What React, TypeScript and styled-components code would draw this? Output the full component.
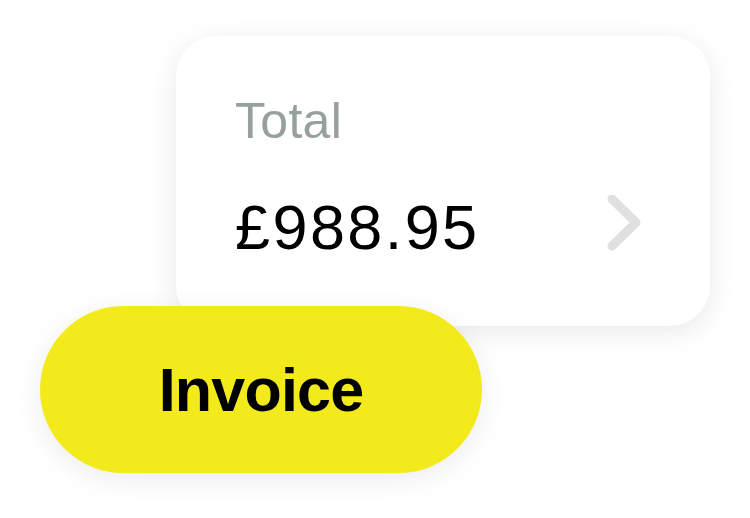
import React from "react"
import styled, { createGlobalStyle } from "styled-components"

const GlobalStyle = createGlobalStyle`
  html, body {
    margin: 0;
    padding: 0;
    background: #ffffff;
    font-family: "Liberation Sans", Arial, sans-serif;
  }
`

const Page = styled.div`
  display: flex;
  flex-direction: column;
  align-items: flex-start;
  width: 750px;
  height: 518px;
  overflow: hidden;
`

const Card = styled.div`
  box-sizing: border-box;
  display: flex;
  flex-direction: column;
  width: 534px;
  height: 290px;
  margin: 36px 0 0 176px;
  padding: 60px 66px 0 59px;
  background: #ffffff;
  border-radius: 40px;
  box-shadow: 0 6px 28px rgba(0, 0, 0, 0.09);
`

const Label = styled.div`
  font-size: 50px;
  line-height: 50px;
  letter-spacing: 0.3px;
  color: #96a19e;
`

const AmountRow = styled.div`
  display: flex;
  align-items: center;
  justify-content: space-between;
  margin-top: 49px;
`

const Amount = styled.div`
  font-size: 63px;
  line-height: 63px;
  letter-spacing: 2.4px;
  color: #000000;
`

const Chevron = styled.svg`
  width: 40px;
  height: 64px;
  flex-shrink: 0;
`

const InvoiceButton = styled.button`
  position: relative;
  display: flex;
  align-items: center;
  justify-content: center;
  width: 442px;
  height: 167px;
  margin: -20px 0 0 40px;
  padding: 0;
  border: none;
  border-radius: 84px;
  background: #f3ea1c;
  box-shadow: 0 6px 28px rgba(0, 0, 0, 0.08);
  font-family: "Liberation Sans", Arial, sans-serif;
  font-size: 61px;
  font-weight: 700;
  letter-spacing: -0.8px;
  color: #000000;
`

export default function App() {
  return (
    <>
      <GlobalStyle />
      <Page>
        <Card>
          <Label>Total</Label>
          <AmountRow>
            <Amount>£988.95</Amount>
            <Chevron viewBox="0 0 40 64">
              <path
                d="M8 4 L32 27.5 L8 51"
                fill="none"
                stroke="#e0e0e0"
                strokeWidth="9"
                strokeLinecap="round"
                strokeLinejoin="round"
              />
            </Chevron>
          </AmountRow>
        </Card>
        <InvoiceButton>Invoice</InvoiceButton>
      </Page>
    </>
  )
}
